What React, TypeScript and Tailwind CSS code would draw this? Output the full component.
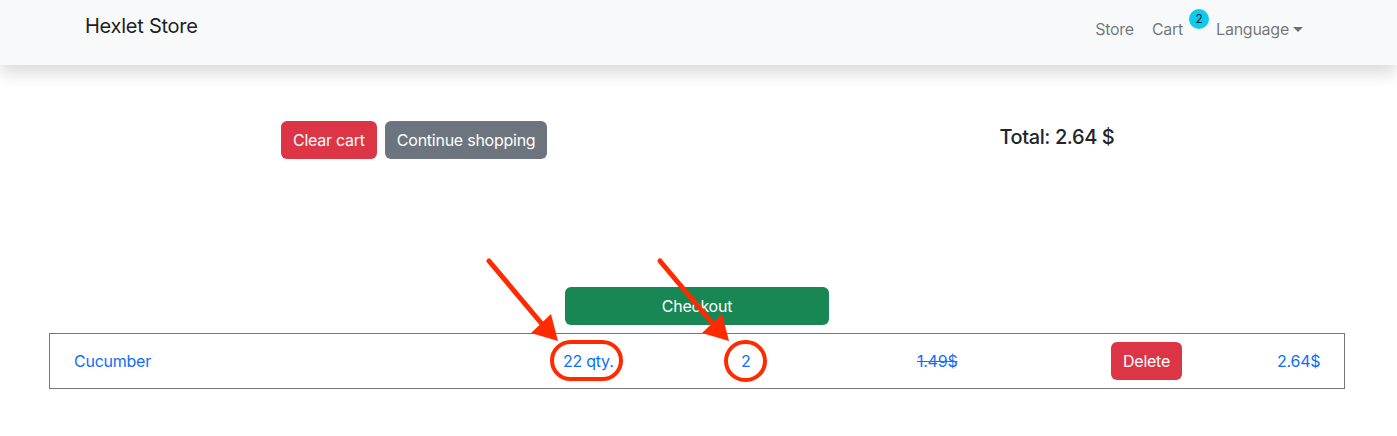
import React from "react";

export default function App() {
  const font = { fontFamily: "Inter, 'Noto Sans', 'Liberation Sans', sans-serif" };
  return (
    <div className="relative w-[1397px] h-[436px] bg-white text-[16px] text-[#212529] overflow-hidden tracking-[-0.25px]" style={font}>
      <nav className="relative z-10 h-[65px] bg-[#f8f9fa] shadow-[0_8px_16px_rgba(0,0,0,0.15)] flex items-start pl-[85px] pr-[86px]">
        <span className="mt-[11px] text-[20px] leading-[30px] text-[rgba(0,0,0,0.9)]">Hexlet Store</span>
        <div className="ml-auto flex items-start leading-6 text-[rgba(0,0,0,0.55)]">
          <span className="pl-2 pr-[12px] mt-[17px]">Store</span>
          <span className="pl-[6px] pr-[6px] mt-[17px]">Cart</span>
          <span className="mt-[9px] w-5 h-5 rounded-full bg-[#0dcaf0] text-[#212529] text-[12px] leading-5 text-center tracking-normal">2</span>
          <span className="pl-[7px] pr-2 mt-[17px] flex items-center">
            Language
            <span className="ml-[4px] inline-block w-0 h-0 border-t-[5px] border-t-[rgba(0,0,0,0.55)] border-x-[5px] border-x-transparent"></span>
          </span>
        </div>
      </nav>

      <div className="w-[1296px] ml-[49px]">
        <div className="flex items-center mt-[56px]">
          <div className="flex gap-2 ml-[232px]">
            <button className="h-[38px] px-3 rounded-md bg-[#dc3545] text-white leading-6">Clear cart</button>
            <button className="h-[38px] px-3 rounded-md bg-[#6c757d] text-white leading-6">Continue shopping</button>
          </div>
          <div className="ml-[452px] text-[20px] font-medium leading-6 -mt-[6px] tracking-[-0.4px]">Total: 2.64 $</div>
        </div>

        <div className="mt-[128px] ml-[516px]">
          <button className="h-[38px] w-[264px] rounded-md bg-[#198754] text-white leading-6">Checkout</button>
        </div>

        <div className="mt-[8px] h-[56px] border border-[#777] flex items-center pl-[24px] text-[#0d6efd]">
          <span className="w-[489px]">Cucumber</span>
          <span className="w-[178px]">22 qty.</span>
          <span className="w-[176px]">2</span>
          <span className="w-[194px] line-through">1.49$</span>
          <span className="w-[166px]">
            <button className="h-[38px] px-3 rounded-md bg-[#dc3545] text-white leading-6">Delete</button>
          </span>
          <span>2.64$</span>
        </div>
      </div>

      <svg className="absolute left-0 top-0 pointer-events-none z-20" width="1397" height="436" viewBox="0 0 1397 436">
        <g stroke="#ff2a00" strokeLinecap="round" fill="none">
          <line x1="489" y1="261" x2="542" y2="324" strokeWidth="5" />
          <line x1="660" y1="261" x2="713" y2="324" strokeWidth="5" />
          <rect x="552" y="342" width="69" height="37" rx="18.5" strokeWidth="4" />
          <rect x="726" y="342" width="39" height="38" rx="19" strokeWidth="4" />
        </g>
        <g fill="#ff2a00">
          <polygon points="531,333 551,314 558,341" />
          <polygon points="702,333 722,314 729,341" />
        </g>
      </svg>
    </div>
  );
}
